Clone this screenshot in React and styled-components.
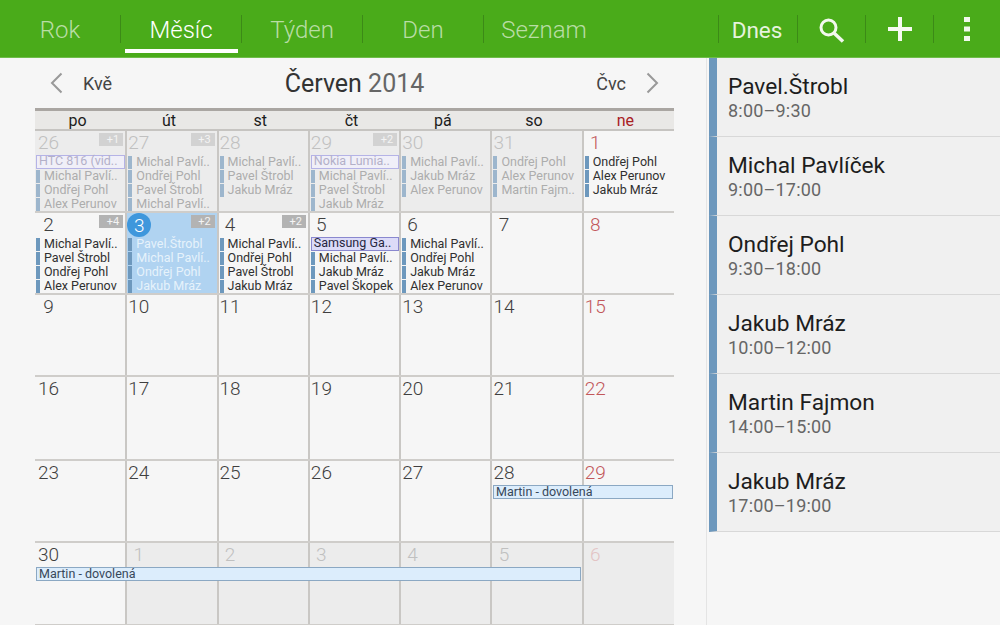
import React from "react";
import styled, { createGlobalStyle } from "styled-components";

const GlobalStyle = createGlobalStyle`
  html, body {
    margin: 0;
    padding: 0;
    background: #f6f6f6;
    font-family: Roboto, "Liberation Sans", sans-serif;
  }
`;

const Page = styled.div`
  width: 1000px;
  height: 625px;
  overflow: hidden;
  display: flex;
  flex-direction: column;
  background: #f6f6f6;
`;

const TopBar = styled.div`
  height: 58px;
  flex: none;
  display: flex;
  align-items: center;
  background: #4aab1a;
  border-bottom: 1px solid #6fbd4a;
  box-sizing: border-box;
`;

const Tabs = styled.div`
  display: flex;
  align-items: center;
  height: 100%;
`;

const Tab = styled.div`
  position: relative;
  width: 120px;
  height: 100%;
  display: flex;
  align-items: center;
  justify-content: center;
  padding-top: 2px;
  box-sizing: border-box;
  font-size: 24px;
  font-weight: 300;
  color: ${(p) => (p.$active ? "#ffffff" : "#b9dda5")};
  &::after {
    content: ${(p) => (p.$active ? '""' : "none")};
    position: absolute;
    left: 4px;
    right: 3px;
    bottom: 4px;
    height: 4px;
    background: #ffffff;
  }
`;

const Sep = styled.div`
  width: 1px;
  height: 28px;
  flex: none;
  background: #3c8a17;
`;

const Actions = styled.div`
  margin-left: auto;
  display: flex;
  align-items: center;
  height: 100%;
`;

const TodayButton = styled.div`
  width: 78px;
  box-sizing: border-box;
  padding: 3px 2px 0 0;
  text-align: center;
  font-size: 22.5px;
  color: #e6f3de;
`;

const IconButton = styled.div`
  width: ${(p) => (p.$last ? 66 : 67)}px;
  display: flex;
  align-items: center;
  justify-content: center;
`;

const Body = styled.div`
  flex: 1;
  display: flex;
  min-height: 0;
`;

const CalendarPane = styled.div`
  width: 706px;
  flex: none;
  padding: 0 32px 0 35px;
  box-sizing: border-box;
`;

const MonthNav = styled.div`
  height: 50px;
  display: flex;
  align-items: center;
  justify-content: space-between;
  padding: 0 15px;
`;

const NavSide = styled.div`
  width: 90px;
  display: flex;
  align-items: center;
  justify-content: ${(p) => (p.$right ? "flex-end" : "flex-start")};
  gap: 20px;
  font-size: 18px;
  color: #444;
`;

const MonthTitle = styled.div`
  font-size: 25px;
  color: #333;
  span {
    color: #666;
  }
`;

const WeekHeader = styled.div`
  display: grid;
  grid-template-columns: repeat(7, 1fr);
  background: #e9e8e6;
  border-top: 3px solid #aaa6a2;
  border-bottom: 2px solid #c6c4c1;
  height: 18px;
`;

const DayName = styled.div`
  padding-right: 6px;
  text-align: center;
  font-size: 16px;
  line-height: 19px;
  color: ${(p) => (p.$sunday ? "#a8201f" : "#1c1c1c")};
`;

const Week = styled.div`
  position: relative;
  height: ${(p) => p.$height}px;
  display: grid;
  grid-template-columns: repeat(7, 1fr);
  border-bottom: 2px solid #cfcdca;
  box-sizing: border-box;
`;

const Cell = styled.div`
  position: relative;
  min-width: 0;
  margin-left: ${(p) => (p.$first ? 0 : -1)}px;
  padding: 0 1px;
  overflow: hidden;
  background: ${(p) => (p.$selected ? "#b0d3f1" : p.$muted ? "#ececec" : "transparent")};
  border-left: ${(p) => (p.$first ? "none" : "2px solid #c9c7c4")};
`;

const DayNumber = styled.div`
  width: 21px;
  height: 24px;
  margin-left: ${(p) => (p.$first ? 2 : 0)}px;
  text-align: center;
  font-size: 19px;
  font-weight: 300;
  line-height: 24px;
  color: ${(p) =>
    p.$muted
      ? p.$sunday
        ? "#e3c4c4"
        : "#c0c0c0"
      : p.$sunday
        ? "#c2575a"
        : "#3f3f3f"};
`;

const TodayCircle = styled.div`
  position: absolute;
  top: 0;
  left: 0;
  width: 24px;
  height: 24px;
  border-radius: 50%;
  background: #3f97dc;
  color: #fff;
  font-size: 19px;
  font-weight: 300;
  line-height: 25px;
  text-align: center;
`;

const MoreBadge = styled.div`
  position: absolute;
  top: 2px;
  right: 3px;
  width: 24px;
  height: 13px;
  background: ${(p) => (p.$muted ? "#d2d2d2" : "#b3b3b3")};
  color: #f4f4f4;
  font-size: 11px;
  line-height: 13px;
  text-align: right;
  padding-right: 4px;
  box-sizing: border-box;
`;

const EventList = styled.div`
  display: flex;
  flex-direction: column;
`;

const EventRow = styled.div`
  height: 14px;
  display: flex;
  align-items: center;
  gap: 4px;
  font-size: 12.5px;
  white-space: nowrap;
  color: ${(p) => (p.$selected ? "#e6f2fb" : p.$muted ? "#adadad" : "#303030")};
`;

const EventName = styled.span`
  margin-bottom: 2px;
`;

const EventMark = styled.span`
  width: 4px;
  height: 13px;
  flex: none;
  background: ${(p) => (p.$muted ? "#9db6cd" : "#6d98bd")};
`;

const DeviceEvent = styled.div`
  height: 14px;
  padding-left: 2px;
  box-sizing: border-box;
  border: 1px solid ${(p) => (p.$muted ? "#b5b3e6" : "#8a88cf")};
  background: ${(p) => (p.$muted ? "#f0eff8" : "#dcdbf8")};
  color: ${(p) => (p.$muted ? "#b3b0c8" : "#262640")};
  font-size: 12.5px;
  line-height: 10px;
  white-space: nowrap;
`;

const SpanEvent = styled.div`
  position: absolute;
  top: 24px;
  height: 14px;
  padding-left: 2px;
  box-sizing: border-box;
  border: 1px solid #8ba8c3;
  background: #dcedfc;
  color: #37485a;
  font-size: 12.5px;
  line-height: 12px;
  white-space: nowrap;
`;

const AgendaPane = styled.div`
  flex: 1;
  border-left: 1px solid #e4e4e4;
  padding-left: 2px;
`;

const AgendaItem = styled.div`
  height: 79px;
  box-sizing: border-box;
  padding: 15px 0 0 11px;
  background: #f0f0f0;
  border-left: 8px solid #6d98bd;
  border-bottom: 1px solid #d8d8d8;
`;

const AgendaTitle = styled.div`
  font-size: 22.7px;
  line-height: 27px;
  color: #1d1d1d;
`;

const AgendaTime = styled.div`
  font-size: 18px;
  line-height: 21px;
  letter-spacing: 0.2px;
  color: #666;
`;

const Chevron = ({ right }) => (
  <svg width="13" height="22" viewBox="0 0 13 22" fill="none" stroke="#999" strokeWidth="2">
    <path d={right ? "M1.5 1.5L11 11l-9.5 9.5" : "M11.5 1.5L2 11l9.5 9.5"} />
  </svg>
);

const SearchIcon = () => (
  <svg width="28" height="28" viewBox="0 0 28 28" fill="none" stroke="#f2f8ee" strokeWidth="3">
    <circle cx="10.5" cy="12.5" r="7.5" />
    <path d="M16 18l9 8.5" strokeWidth="3.5" />
  </svg>
);

const PlusIcon = () => (
  <svg width="24" height="24" viewBox="0 0 24 24" fill="none" stroke="#f6faf2" strokeWidth="4">
    <path d="M12 0v24M0 12h24" />
  </svg>
);

const DotsIcon = () => (
  <svg width="8" height="26" viewBox="0 0 8 26" fill="#f2f8ee">
    <rect x="1" y="1" width="6" height="5" />
    <rect x="1" y="10.5" width="6" height="5" />
    <rect x="1" y="20" width="6" height="5" />
  </svg>
);

const dayNames = ["po", "út", "st", "čt", "pá", "so", "ne"];

const weeks = [
  {
    height: 82,
    days: [
      { n: 26, muted: true, more: 1, device: "HTC 816 (vid..", events: ["Michal Pavlí..", "Ondřej Pohl", "Alex Perunov"] },
      { n: 27, muted: true, more: 3, events: ["Michal Pavlí..", "Ondřej Pohl", "Pavel Štrobl", "Michal Pavlí.."] },
      { n: 28, muted: true, events: ["Michal Pavlí..", "Pavel Štrobl", "Jakub Mráz"] },
      { n: 29, muted: true, more: 2, device: "Nokia Lumia..", events: ["Michal Pavlí..", "Pavel Štrobl", "Jakub Mráz"] },
      { n: 30, muted: true, events: ["Michal Pavlí..", "Jakub Mráz", "Alex Perunov"] },
      { n: 31, muted: true, events: ["Ondřej Pohl", "Alex Perunov", "Martin Fajm.."] },
      { n: 1, events: ["Ondřej Pohl", "Alex Perunov", "Jakub Mráz"] },
    ],
  },
  {
    height: 82,
    days: [
      { n: 2, more: 4, events: ["Michal Pavlí..", "Pavel Štrobl", "Ondřej Pohl", "Alex Perunov"] },
      { n: 3, selected: true, more: 2, events: ["Pavel.Štrobl", "Michal Pavlí..", "Ondřej Pohl", "Jakub Mráz"] },
      { n: 4, more: 2, events: ["Michal Pavlí..", "Ondřej Pohl", "Pavel Štrobl", "Jakub Mráz"] },
      { n: 5, device: "Samsung Ga..", events: ["Michal Pavlí..", "Jakub Mráz", "Pavel Škopek"] },
      { n: 6, events: ["Michal Pavlí..", "Ondřej Pohl", "Jakub Mráz", "Alex Perunov"] },
      { n: 7 },
      { n: 8 },
    ],
  },
  { height: 82, days: [9, 10, 11, 12, 13, 14, 15].map((n) => ({ n })) },
  { height: 84, days: [16, 17, 18, 19, 20, 21, 22].map((n) => ({ n })) },
  {
    height: 82,
    days: [23, 24, 25, 26, 27, 28, 29].map((n) => ({ n })),
    span: { left: 458, width: 180 },
  },
  {
    height: 83,
    days: [
      { n: 30 },
      { n: 1, muted: true },
      { n: 2, muted: true },
      { n: 3, muted: true },
      { n: 4, muted: true },
      { n: 5, muted: true },
      { n: 6, muted: true },
    ],
    span: { left: 1, width: 545 },
  },
];

const agenda = [
  ["Pavel.Štrobl", "8:00–9:30"],
  ["Michal Pavlíček", "9:00–17:00"],
  ["Ondřej Pohl", "9:30–18:00"],
  ["Jakub Mráz", "10:00–12:00"],
  ["Martin Fajmon", "14:00–15:00"],
  ["Jakub Mráz", "17:00–19:00"],
];

const DayCell = ({ day, index }) => {
  const sunday = index === 6;
  return (
    <Cell $first={index === 0} $muted={day.muted} $selected={day.selected}>
      {day.selected ? (
        <TodayCircle>{day.n}</TodayCircle>
      ) : (
        <DayNumber $first={index === 0} $muted={day.muted} $sunday={sunday}>
          {day.n}
        </DayNumber>
      )}
      {day.selected && <DayNumber />}
      {day.more && <MoreBadge $muted={day.muted}>+{day.more}</MoreBadge>}
      <EventList>
        {day.device && <DeviceEvent $muted={day.muted}>{day.device}</DeviceEvent>}
        {(day.events || []).map((name, i) => (
          <EventRow key={i} $muted={day.muted} $selected={day.selected}>
            <EventMark $muted={day.muted} />
            <EventName>{name}</EventName>
          </EventRow>
        ))}
      </EventList>
    </Cell>
  );
};

const App = () => {
  return (
    <Page>
      <GlobalStyle />
      <TopBar>
        <Tabs>
          <Tab>Rok</Tab>
          <Sep />
          <Tab $active>Měsíc</Tab>
          <Sep />
          <Tab>Týden</Tab>
          <Sep />
          <Tab>Den</Tab>
          <Sep />
          <Tab>Seznam</Tab>
        </Tabs>
        <Actions>
          <Sep />
          <TodayButton>Dnes</TodayButton>
          <Sep />
          <IconButton>
            <SearchIcon />
          </IconButton>
          <Sep />
          <IconButton>
            <PlusIcon />
          </IconButton>
          <Sep />
          <IconButton $last>
            <DotsIcon />
          </IconButton>
        </Actions>
      </TopBar>
      <Body>
        <CalendarPane>
          <MonthNav>
            <NavSide>
              <Chevron />
              Kvě
            </NavSide>
            <MonthTitle>
              Červen <span>2014</span>
            </MonthTitle>
            <NavSide $right>
              Čvc
              <Chevron right />
            </NavSide>
          </MonthNav>
          <WeekHeader>
            {dayNames.map((name, i) => (
              <DayName key={name} $sunday={i === 6}>
                {name}
              </DayName>
            ))}
          </WeekHeader>
          {weeks.map((week, w) => (
            <Week key={w} $height={week.height}>
              {week.days.map((day, i) => (
                <DayCell key={i} day={day} index={i} />
              ))}
              {week.span && (
                <SpanEvent style={{ left: week.span.left, width: week.span.width }}>
                  Martin - dovolená
                </SpanEvent>
              )}
            </Week>
          ))}
        </CalendarPane>
        <AgendaPane>
          {agenda.map(([title, time], i) => (
            <AgendaItem key={i}>
              <AgendaTitle>{title}</AgendaTitle>
              <AgendaTime>{time}</AgendaTime>
            </AgendaItem>
          ))}
        </AgendaPane>
      </Body>
    </Page>
  );
};

export default App;
